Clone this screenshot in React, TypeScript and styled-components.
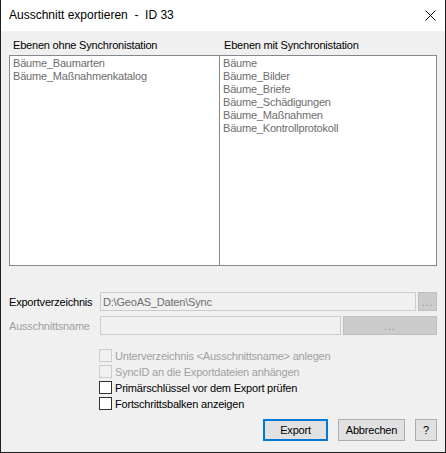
import React from "react";
import styled, { createGlobalStyle, css } from "styled-components";

const GlobalStyle = createGlobalStyle`
  html, body {
    margin: 0;
    padding: 0;
    background: #f0f0f0;
  }
  * {
    box-sizing: border-box;
  }
`;

const withoutSync = ["Bäume_Baumarten", "Bäume_Maßnahmenkatalog"];
const withSync = [
  "Bäume",
  "Bäume_Bilder",
  "Bäume_Briefe",
  "Bäume_Schädigungen",
  "Bäume_Maßnahmen",
  "Bäume_Kontrollprotokoll"
];

const options = [
  { label: "Unterverzeichnis <Ausschnittsname> anlegen", disabled: true },
  { label: "SyncID an die Exportdateien anhängen", disabled: true },
  { label: "Primärschlüssel vor dem Export prüfen", disabled: false },
  { label: "Fortschrittsbalken anzeigen", disabled: false }
];

export default function App() {
  return (
    <>
      <GlobalStyle />
      <Window>
        <TitleBar>
          <Title>Ausschnitt exportieren&nbsp; - &nbsp;ID 33</Title>
          <CloseButton>
            <svg width="11" height="11" viewBox="0 0 11 11">
              <path d="M0.5 0.5 L10.5 10.5 M10.5 0.5 L0.5 10.5" stroke="#000" strokeWidth="1" fill="none" />
            </svg>
          </CloseButton>
        </TitleBar>
        <Body>
          <ListHeaders>
            <span>Ebenen ohne Synchronistation</span>
            <span>Ebenen mit Synchronistation</span>
          </ListHeaders>
          <Lists>
            <ListBox>
              {withoutSync.map(item => (
                <ListItem key={item}>{item}</ListItem>
              ))}
            </ListBox>
            <ListBox joined>
              {withSync.map(item => (
                <ListItem key={item}>{item}</ListItem>
              ))}
            </ListBox>
          </Lists>
          <FieldRow>
            <FieldLabel>Exportverzeichnis</FieldLabel>
            <TextField>D:\GeoAS_Daten\Sync</TextField>
            <BrowseButton width={19}>...</BrowseButton>
          </FieldRow>
          <FieldRow second>
            <FieldLabel disabled>Ausschnittsname</FieldLabel>
            <TextField />
            <BrowseButton width={94}>...</BrowseButton>
          </FieldRow>
          <Options>
            {options.map(({ label, disabled }) => (
              <OptionRow key={label} disabled={disabled}>
                <CheckBox disabled={disabled} />
                <span>{label}</span>
              </OptionRow>
            ))}
          </Options>
          <ButtonBar>
            <Button primary width={65}>Export</Button>
            <Button width={67}>Abbrechen</Button>
            <Button width={22}>?</Button>
          </ButtonBar>
        </Body>
      </Window>
    </>
  );
}

const Window = styled.div`
  width: 446px;
  height: 453px;
  display: flex;
  flex-direction: column;
  background: #f0f0f0;
  border: 1px solid #1f1f1f;
  border-top: none;
  font-family: "Liberation Sans", Arial, sans-serif;
  font-size: 11px;
  letter-spacing: -0.2px;
  color: #000;
`;

const TitleBar = styled.div`
  height: 31px;
  flex: none;
  display: flex;
  align-items: center;
  justify-content: space-between;
  background: #fff;
  padding: 0 9px 0 8px;
`;

const Title = styled.span`
  font-family: "Liberation Sans", Arial, sans-serif;
  font-size: 12px;
  letter-spacing: 0;
  color: #000;
  padding-bottom: 1px;
`;

const CloseButton = styled.div`
  display: flex;
  align-items: center;
  justify-content: center;
  width: 12px;
  height: 12px;
  margin-bottom: 1px;
`;

const Body = styled.div`
  flex: 1;
  display: flex;
  flex-direction: column;
  padding: 8px 8px 11px;
`;

const ListHeaders = styled.div`
  display: grid;
  grid-template-columns: 211px 1fr;
  line-height: 13px;
  height: 13px;
  margin-bottom: 3px;

  span {
    padding-left: 4px;
    white-space: nowrap;
  }
`;

const Lists = styled.div`
  display: grid;
  grid-template-columns: 211px 217px;
  height: 211px;
`;

const ListBox = styled.div<{ joined?: boolean }>`
  background: #fff;
  border: 1px solid #828790;
  padding: 1px 3px;
  color: #6d6d6d;
  ${p =>
    p.joined &&
    css`
      border-left: none;
      padding-left: 3px;
    `}
`;

const ListItem = styled.div`
  line-height: 13px;
  white-space: nowrap;
`;

const FieldRow = styled.div<{ second?: boolean }>`
  display: grid;
  grid-template-columns: 90px 1fr auto;
  column-gap: 1px;
  height: 19px;
  align-items: stretch;
  margin-top: ${p => (p.second ? "5px" : "26px")};
`;

const FieldLabel = styled.div<{ disabled?: boolean }>`
  display: flex;
  align-items: center;
  white-space: nowrap;
  color: ${p => (p.disabled ? "#a0a0a0" : "#000")};
  margin-right: -1px;
`;

const TextField = styled.div`
  border: 1px solid #cccccc;
  background: #f0f0f0;
  color: #6d6d6d;
  padding: 0 2px;
  display: flex;
  align-items: center;
  white-space: nowrap;
`;

const BrowseButton = styled.div<{ width: number }>`
  width: ${p => p.width}px;
  margin-left: 1px;
  background: #cccccc;
  border: 1px solid #bfbfbf;
  color: #838383;
  display: flex;
  align-items: flex-end;
  justify-content: center;
  padding-bottom: 2px;
  font-size: 10px;
  line-height: 10px;
  letter-spacing: 1px;
`;

const Options = styled.div`
  display: flex;
  flex-direction: column;
  margin-top: 13px;
  padding-left: 90px;
`;

const OptionRow = styled.label<{ disabled?: boolean }>`
  display: flex;
  align-items: flex-start;
  height: 16px;
  line-height: 16px;
  gap: 3px;
  white-space: nowrap;
  color: ${p => (p.disabled ? "#a0a0a0" : "#000")};
`;

const CheckBox = styled.span<{ disabled?: boolean }>`
  width: 13px;
  height: 13px;
  margin-top: 1px;
  flex: none;
  background: #fff;
  border: 1px solid ${p => (p.disabled ? "#cccccc" : "#333333")};
  ${p =>
    p.disabled &&
    css`
      background: #f0f0f0;
    `}
`;

const ButtonBar = styled.div`
  display: flex;
  justify-content: flex-end;
  gap: 10px;
  margin-top: 7px;
`;

const Button = styled.div<{ width: number; primary?: boolean }>`
  width: ${p => p.width}px;
  height: 22px;
  display: flex;
  align-items: center;
  justify-content: center;
  background: #e1e1e1;
  border: 1px solid #adadad;
  ${p =>
    p.primary &&
    css`
      border: 2px solid #0078d7;
    `}
`;
